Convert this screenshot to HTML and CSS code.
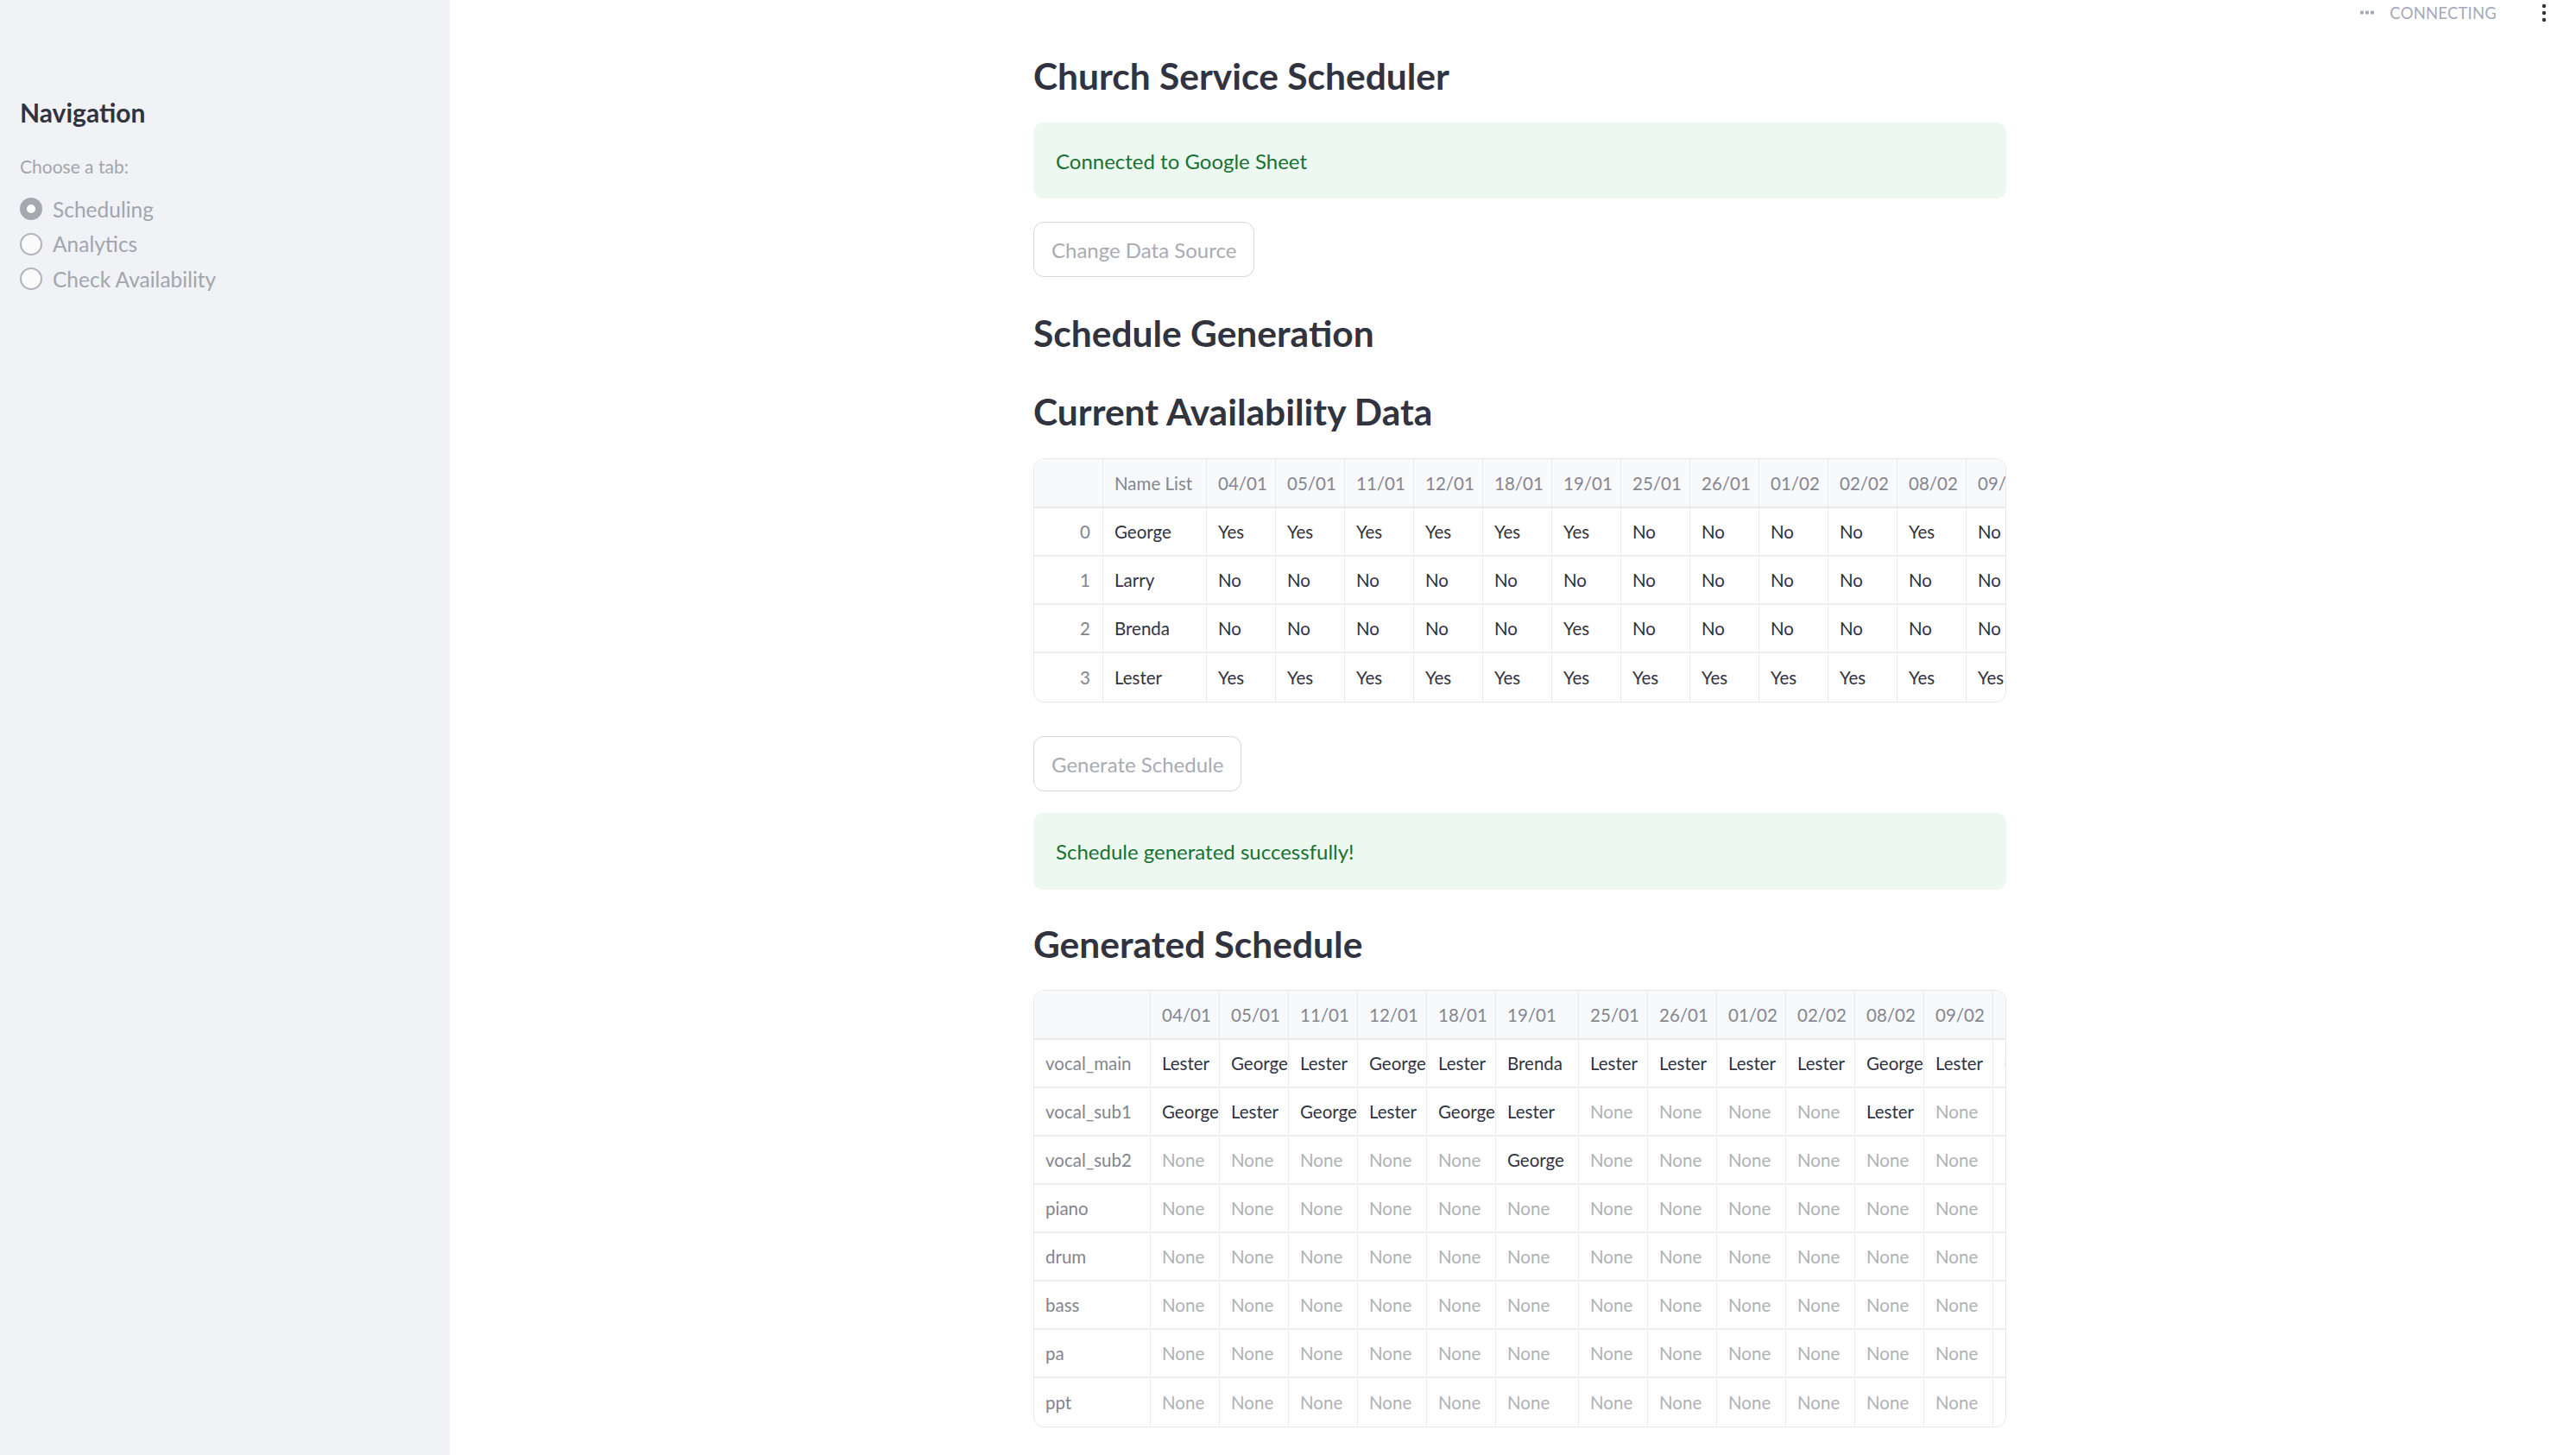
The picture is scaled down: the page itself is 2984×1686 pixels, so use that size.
FILE: index.html
```html
<!DOCTYPE html>
<html lang="en">
<head>
<meta charset="utf-8">
<title>Church Service Scheduler</title>
<link rel="stylesheet" href="styles.css">
</head>
<body>
<div class="app">
  <aside class="sidebar">
    <h2 class="nav-title">Navigation</h2>
    <div class="radio-label">Choose a tab:</div>
    <div class="radio-group">
      <div class="radio is-selected"><span class="radio-dot"></span><span class="radio-text">Scheduling</span></div>
      <div class="radio"><span class="radio-dot"></span><span class="radio-text">Analytics</span></div>
      <div class="radio"><span class="radio-dot"></span><span class="radio-text">Check Availability</span></div>
    </div>
  </aside>

  <main class="main">
    <div class="status">
      <svg class="status-dots" width="16" height="5" viewBox="0 0 16 5"><rect x="0" y="0.5" width="4" height="4" rx="0.8"/><rect x="6" y="0.5" width="4" height="4" rx="0.8"/><rect x="12" y="0.5" width="4" height="4" rx="0.8"/></svg>
      <span class="status-text">CONNECTING</span>
      <svg class="kebab" width="6" height="22" viewBox="0 0 6 22"><circle cx="3" cy="3" r="2.2"/><circle cx="3" cy="11" r="2.2"/><circle cx="3" cy="19" r="2.2"/></svg>
    </div>

    <div class="block">
      <h3 class="heading heading-title">Church Service Scheduler</h3>
      <div class="alert alert-connected">Connected to Google Sheet</div>
      <button class="btn btn-change">Change Data Source</button>

      <h3 class="heading heading-gen">Schedule Generation</h3>
      <h3 class="heading heading-avail">Current Availability Data</h3>

      <div class="frame frame-avail">
        <div class="row row-head">
          <div class="cell"></div><div class="cell">Name List</div>
          <div class="cell">04/01</div><div class="cell">05/01</div><div class="cell">11/01</div><div class="cell">12/01</div><div class="cell">18/01</div><div class="cell">19/01</div><div class="cell">25/01</div><div class="cell">26/01</div><div class="cell">01/02</div><div class="cell">02/02</div><div class="cell">08/02</div><div class="cell">09/02</div>
        </div>
        <div class="row">
          <div class="cell idx num">0</div><div class="cell">George</div>
          <div class="cell">Yes</div><div class="cell">Yes</div><div class="cell">Yes</div><div class="cell">Yes</div><div class="cell">Yes</div><div class="cell">Yes</div><div class="cell">No</div><div class="cell">No</div><div class="cell">No</div><div class="cell">No</div><div class="cell">Yes</div><div class="cell">No</div>
        </div>
        <div class="row">
          <div class="cell idx num">1</div><div class="cell">Larry</div>
          <div class="cell">No</div><div class="cell">No</div><div class="cell">No</div><div class="cell">No</div><div class="cell">No</div><div class="cell">No</div><div class="cell">No</div><div class="cell">No</div><div class="cell">No</div><div class="cell">No</div><div class="cell">No</div><div class="cell">No</div>
        </div>
        <div class="row">
          <div class="cell idx num">2</div><div class="cell">Brenda</div>
          <div class="cell">No</div><div class="cell">No</div><div class="cell">No</div><div class="cell">No</div><div class="cell">No</div><div class="cell">Yes</div><div class="cell">No</div><div class="cell">No</div><div class="cell">No</div><div class="cell">No</div><div class="cell">No</div><div class="cell">No</div>
        </div>
        <div class="row row-last">
          <div class="cell idx num">3</div><div class="cell">Lester</div>
          <div class="cell">Yes</div><div class="cell">Yes</div><div class="cell">Yes</div><div class="cell">Yes</div><div class="cell">Yes</div><div class="cell">Yes</div><div class="cell">Yes</div><div class="cell">Yes</div><div class="cell">Yes</div><div class="cell">Yes</div><div class="cell">Yes</div><div class="cell">Yes</div>
        </div>
      </div>

      <button class="btn btn-generate">Generate Schedule</button>
      <div class="alert alert-success">Schedule generated successfully!</div>

      <h3 class="heading heading-result">Generated Schedule</h3>

      <div class="frame frame-sched">
        <div class="row row-head">
          <div class="cell"></div>
          <div class="cell">04/01</div><div class="cell">05/01</div><div class="cell">11/01</div><div class="cell">12/01</div><div class="cell">18/01</div><div class="cell">19/01</div><div class="cell">25/01</div><div class="cell">26/01</div><div class="cell">01/02</div><div class="cell">02/02</div><div class="cell">08/02</div><div class="cell">09/02</div><div class="cell">15/02</div>
        </div>
        <div class="row">
          <div class="cell idx">vocal_main</div>
          <div class="cell">Lester</div><div class="cell">George</div><div class="cell">Lester</div><div class="cell">George</div><div class="cell">Lester</div><div class="cell">Brenda</div><div class="cell">Lester</div><div class="cell">Lester</div><div class="cell">Lester</div><div class="cell">Lester</div><div class="cell">George</div><div class="cell">Lester</div><div class="cell">George</div>
        </div>
        <div class="row">
          <div class="cell idx">vocal_sub1</div>
          <div class="cell">George</div><div class="cell">Lester</div><div class="cell">George</div><div class="cell">Lester</div><div class="cell">George</div><div class="cell">Lester</div><div class="cell none">None</div><div class="cell none">None</div><div class="cell none">None</div><div class="cell none">None</div><div class="cell">Lester</div><div class="cell none">None</div><div class="cell none">None</div>
        </div>
        <div class="row">
          <div class="cell idx">vocal_sub2</div>
          <div class="cell none">None</div><div class="cell none">None</div><div class="cell none">None</div><div class="cell none">None</div><div class="cell none">None</div><div class="cell">George</div><div class="cell none">None</div><div class="cell none">None</div><div class="cell none">None</div><div class="cell none">None</div><div class="cell none">None</div><div class="cell none">None</div><div class="cell none">None</div>
        </div>
        <div class="row">
          <div class="cell idx">piano</div>
          <div class="cell none">None</div><div class="cell none">None</div><div class="cell none">None</div><div class="cell none">None</div><div class="cell none">None</div><div class="cell none">None</div><div class="cell none">None</div><div class="cell none">None</div><div class="cell none">None</div><div class="cell none">None</div><div class="cell none">None</div><div class="cell none">None</div><div class="cell none">None</div>
        </div>
        <div class="row">
          <div class="cell idx">drum</div>
          <div class="cell none">None</div><div class="cell none">None</div><div class="cell none">None</div><div class="cell none">None</div><div class="cell none">None</div><div class="cell none">None</div><div class="cell none">None</div><div class="cell none">None</div><div class="cell none">None</div><div class="cell none">None</div><div class="cell none">None</div><div class="cell none">None</div><div class="cell none">None</div>
        </div>
        <div class="row">
          <div class="cell idx">bass</div>
          <div class="cell none">None</div><div class="cell none">None</div><div class="cell none">None</div><div class="cell none">None</div><div class="cell none">None</div><div class="cell none">None</div><div class="cell none">None</div><div class="cell none">None</div><div class="cell none">None</div><div class="cell none">None</div><div class="cell none">None</div><div class="cell none">None</div><div class="cell none">None</div>
        </div>
        <div class="row">
          <div class="cell idx">pa</div>
          <div class="cell none">None</div><div class="cell none">None</div><div class="cell none">None</div><div class="cell none">None</div><div class="cell none">None</div><div class="cell none">None</div><div class="cell none">None</div><div class="cell none">None</div><div class="cell none">None</div><div class="cell none">None</div><div class="cell none">None</div><div class="cell none">None</div><div class="cell none">None</div>
        </div>
        <div class="row row-last">
          <div class="cell idx">ppt</div>
          <div class="cell none">None</div><div class="cell none">None</div><div class="cell none">None</div><div class="cell none">None</div><div class="cell none">None</div><div class="cell none">None</div><div class="cell none">None</div><div class="cell none">None</div><div class="cell none">None</div><div class="cell none">None</div><div class="cell none">None</div><div class="cell none">None</div><div class="cell none">None</div>
        </div>
      </div>
    </div>
  </main>
</div>
</body>
</html>
```

FILE: styles.css
```css
* { box-sizing: border-box; }

html, body {
  margin: 0;
  padding: 0;
  background: #ffffff;
  font-family: "Lato", "Noto Sans", sans-serif;
  color: #31333f;
}

.app {
  display: flex;
  min-height: 1686px;
}

/* ---------- Sidebar ---------- */
.sidebar {
  width: 521px;
  flex: 0 0 521px;
  background: #f0f2f6;
  padding: 112px 0 0 23px;
}

.nav-title {
  margin: 0;
  font-size: 30px;
  line-height: 36px;
  font-weight: 700;
  color: #31333f;
}

.radio-label {
  margin-top: 31px;
  font-size: 21px;
  line-height: 28px;
  color: #a3a5ad;
}

.radio-group {
  margin-top: 15px;
  display: flex;
  flex-direction: column;
}

.radio {
  display: flex;
  align-items: center;
  height: 40.5px;
}

.radio-dot {
  width: 26px;
  height: 26px;
  border-radius: 50%;
  border: 2px solid #b1b3ba;
  background: #fafafb;
  flex: 0 0 26px;
  position: relative;
}

.radio.is-selected .radio-dot {
  background: #a6a8b0;
  border-color: #a6a8b0;
}

.radio.is-selected .radio-dot::after {
  content: "";
  position: absolute;
  left: 50%;
  top: 50%;
  width: 10px;
  height: 10px;
  margin: -5px 0 0 -5px;
  border-radius: 50%;
  background: #ffffff;
}

.radio-text {
  margin-left: 12px;
  font-size: 24.5px;
  color: #a3a5ad;
}

/* ---------- Main ---------- */
.main {
  flex: 1;
  display: flex;
  justify-content: center;
  padding-left: 16px;
  position: relative;
}

.status {
  position: absolute;
  top: 0;
  right: 0;
  height: 30px;
  display: flex;
  align-items: center;
  padding-right: 34px;
}

.status-dots { fill: #a6a9b8; margin-right: 18px; margin-top: -2px; }

.status-text {
  font-size: 18.5px;
  letter-spacing: 0.2px;
  color: #a6a9b8;
  margin-right: 52px;
}

.kebab { fill: #31333f; }

.block {
  width: 1127px;
  padding-top: 63px;
  padding-bottom: 40px;
}

.heading {
  margin: 0;
  font-size: 42.5px;
  line-height: 50px;
  font-weight: 700;
  color: #31333f;
}

.heading-gen { margin-top: 40px; }
.heading-avail { margin-top: 41px; }
.heading-result { margin-top: 38px; }

.alert {
  display: flex;
  align-items: center;
  padding: 0 26px;
  border-radius: 12px;
  background: #edf8f0;
  color: #177233;
  font-size: 24px;
}

.alert-connected { margin-top: 29px; height: 88px; }
.alert-success { margin-top: 25px; height: 89px; }

.btn {
  display: block;
  height: 64px;
  padding: 0 20px;
  border: 1px solid #d6d7db;
  border-radius: 12px;
  background: #ffffff;
  color: #a9abb3;
  font-family: inherit;
  font-size: 24px;
}

.btn-change { margin-top: 27px; }
.btn-generate { margin-top: 39px; }

/* ---------- Data frames ---------- */
.frame {
  width: 1127px;
  border: 1px solid #e7e8eb;
  border-radius: 12px;
  overflow: hidden;
  font-size: 20.5px;
}

.frame-avail { margin-top: 29px; }
.frame-sched { margin-top: 28px; }

.row {
  display: grid;
  height: 56px;
  border-bottom: 2px solid #eeeef0;
}

.row-head {
  height: 57px;
  background: #f8f9fb;
  color: #85878f;
  border-bottom-color: #e9eaed;
}

.row-last { border-bottom: none; height: 56px; }

.frame-avail .row {
  grid-template-columns: 80px 120px repeat(12, 80px);
}

.frame-sched .row {
  grid-template-columns: 135px repeat(5, 80px) 96px repeat(7, 80px);
}

.cell {
  display: flex;
  align-items: center;
  padding: 0 12px 0 13px;
  border-right: 1px solid #e9eaed;
  white-space: nowrap;
  overflow: hidden;
}

.row-head .cell { padding-top: 1px; }

.idx { color: #83858d; }
.idx.num { justify-content: flex-end; padding-right: 14px; }
.none { color: #b0b1b6; }
```
